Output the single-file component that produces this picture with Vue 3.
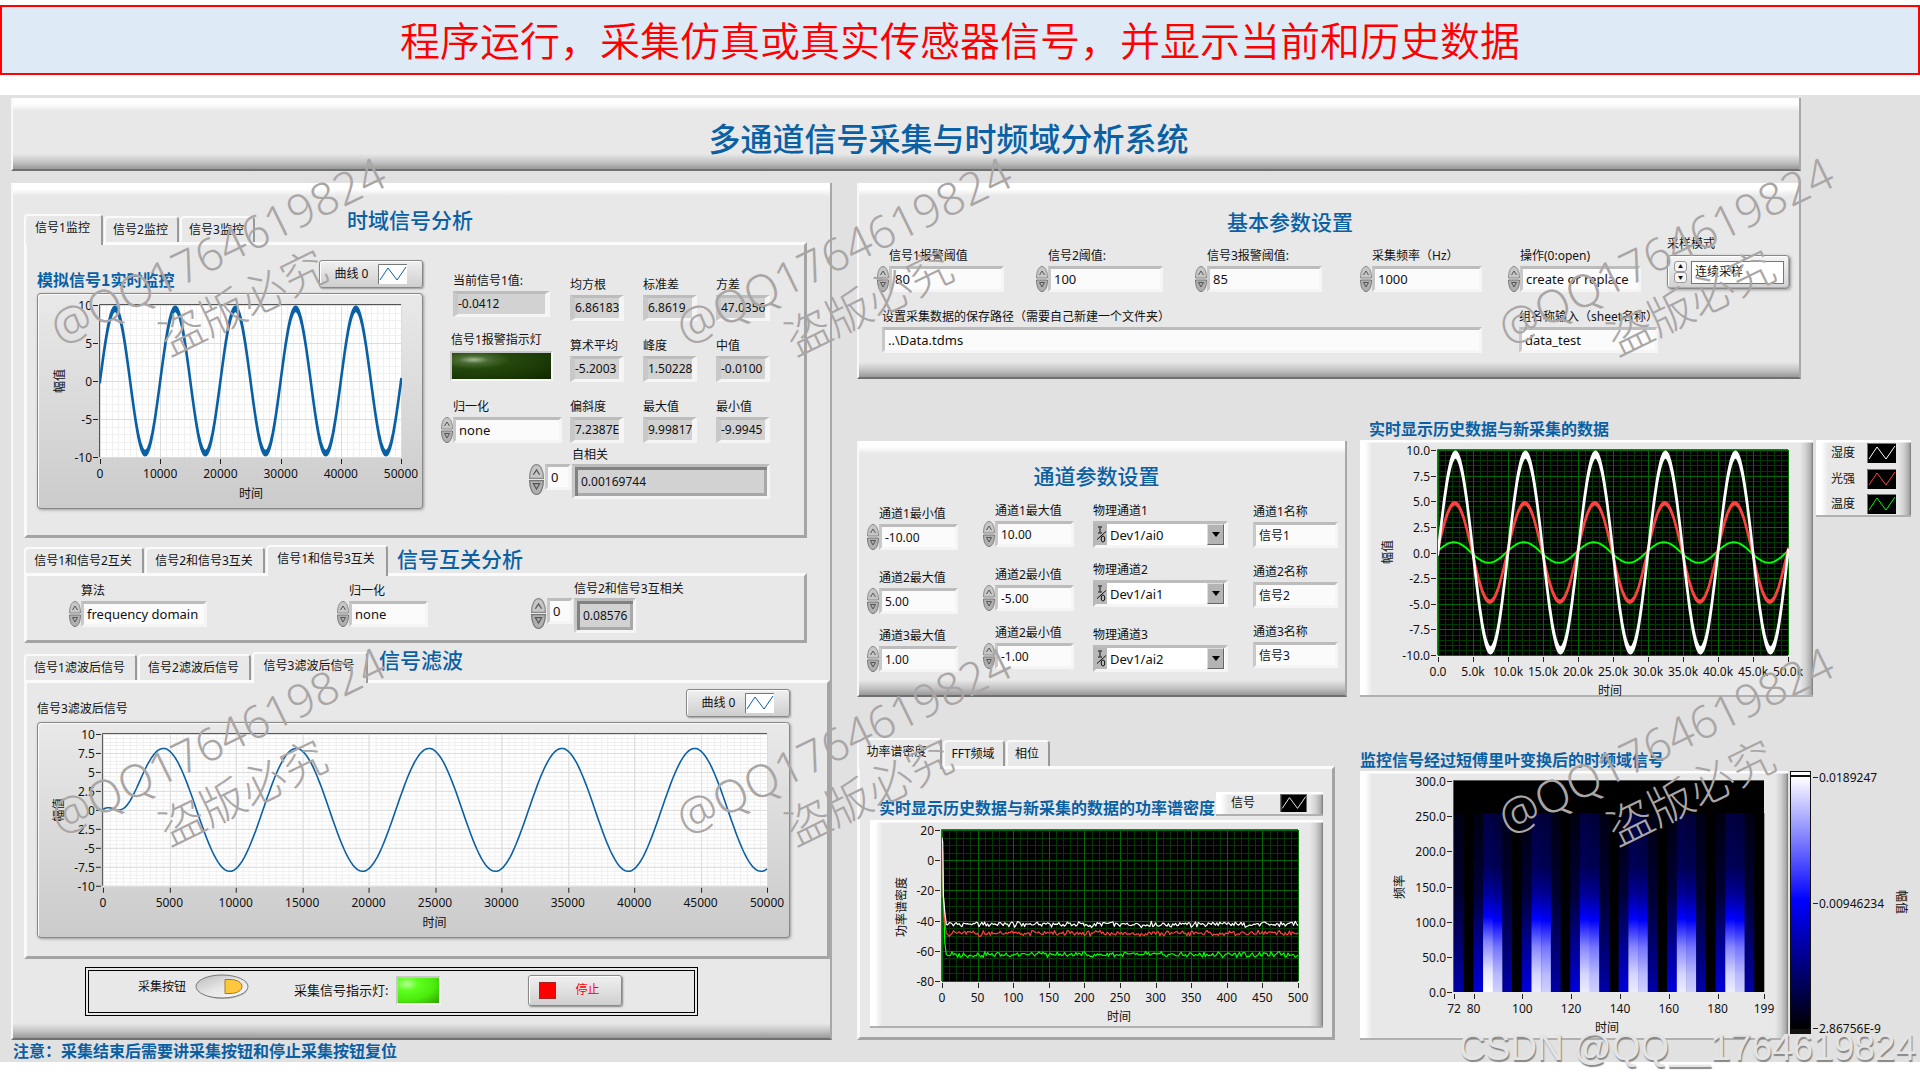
<script setup>
import { h, ref } from 'vue'

const BLUE = '#0a60a4'

/* ---------- curve helpers ---------- */
const wave = (amp, shift) => t => amp * Math.sin((2 * Math.PI * (t - shift)) / 10000)
const filtered = t => 8.1 * Math.sin((2 * Math.PI * (t - 2050)) / 10000) + 7.8 * Math.exp(-((t / 1500) ** 2))
const noise = (i, seed) => {
  const v = Math.sin(i * 12.9898 + seed * 78.233) * 43758.5453
  return (v - Math.floor(v)) * 2 - 1
}
const sample = (fn, max, n) => Array.from({ length: n + 1 }, (_, i) => [(i * max) / n, fn((i * max) / n)])
const floorLine = (start, level, seed) =>
  [[0, start], [1, start - 3], [2, -24], [4, level + 8], [6, level]].concat(
    Array.from({ length: 247 }, (_, i) => [8 + i * 2, level + noise(i, seed) * 1.3 + noise(i, seed + 9) * 0.9])
  )
const range = (from, to, n) => Array.from({ length: n + 1 }, (_, i) => from + ((to - from) * i) / n)

/* ---------- axes with curves ---------- */
const Plot = p => {
  const { w, h: ht, box, xr, yr, dark } = p.c
  const X = v => box[0] + ((v - xr[0]) / (xr[1] - xr[0])) * box[2]
  const Y = v => box[1] + ((yr[1] - v) / (yr[1] - yr[0])) * box[3]
  const right = box[0] + box[2]
  const bottom = box[1] + box[3]
  const vline = (v, color) => h('path', { d: `M${Math.round(X(v)) + 0.5} ${box[1]}V${bottom}`, stroke: color })
  const hline = (v, color) => h('path', { d: `M${box[0]} ${Math.round(Y(v)) + 0.5}H${right}`, stroke: color })
  const minor = dark ? '#003a00' : '#f0f0f0'
  const major = dark ? '#006a00' : '#dcdcdc'
  const kids = [h('rect', { x: box[0], y: box[1], width: box[2], height: box[3], fill: dark ? '#000' : '#fff' })]
  if (p.c.minor) {
    range(xr[0], xr[1], p.c.minor[0]).forEach(v => kids.push(vline(v, minor)))
    range(yr[0], yr[1], p.c.minor[1]).forEach(v => kids.push(hline(v, minor)))
    p.c.xt.forEach(([v]) => kids.push(vline(v, major)))
    p.c.yt.forEach(([v]) => kids.push(hline(v, major)))
  }
  ;(p.c.cells || []).forEach(r => kids.push(h('rect', r)))
  ;(p.c.lines || []).forEach(l => {
    const top = l.pts.map(([x, y]) => `${X(x).toFixed(1)} ${Y(y + (l.band || 0)).toFixed(1)}`)
    const low = l.band ? l.pts.map(([x, y]) => `${X(x).toFixed(1)} ${Y(y - l.band).toFixed(1)}`).reverse() : []
    kids.push(h('path', {
      d: 'M' + top.concat(low).join('L'),
      fill: l.band ? l.color : 'none', stroke: l.color, 'stroke-width': l.width, 'stroke-linejoin': 'round'
    }))
  })
  kids.push(h('path', { d: `M${box[0] - 0.5} ${bottom}V${box[1] - 0.5}H${right}`, stroke: '#555', fill: 'none' }))
  p.c.yt.forEach(([v, t]) => {
    kids.push(h('path', { d: `M${box[0] - 7} ${Math.round(Y(v)) + 0.5}h5`, stroke: '#222' }))
    kids.push(h('text', { x: box[0] - 8, y: Y(v) + 5, 'text-anchor': 'end' }, t))
  })
  p.c.xt.forEach(([v, t]) => {
    kids.push(h('path', { d: `M${Math.round(X(v)) + 0.5} ${bottom + 2}v5`, stroke: '#222' }))
    kids.push(h('text', { x: X(v), y: bottom + 21, 'text-anchor': 'middle' }, t))
  })
  const [lx, ly] = p.c.xl
  const [mx, my] = p.c.yl
  kids.push(h('text', { x: lx, y: ly + 5, 'text-anchor': 'middle' }, '时间'))
  kids.push(h('text', { 'text-anchor': 'middle', transform: `translate(${mx + 5} ${my}) rotate(-90)` }, p.c.yName))
  return h('svg', { viewBox: `0 0 ${w} ${ht}`, 'font-size': 12, fill: '#111', role: 'img', 'aria-label': p.c.name }, kids)
}
Plot.props = ['c']

/* ---------- oval increment / decrement pair ---------- */
const Spin = () =>
  h('button', { type: 'button', 'aria-label': '增减' }, [
    h('svg', { viewBox: '0 0 12 26', width: '100%', height: '100%', preserveAspectRatio: 'none' }, [
      h('path', { d: 'M.5 12C.5 5 3 .5 6 .5S11.500 5 11.500 12Z', fill: '#c6c6c6', stroke: '#8a8a8a' }),
      h('path', { d: 'M.5 14C.5 21 3 25.500 6 25.500S11.500 21 11.500 14Z', fill: '#b0b0b0', stroke: '#777' }),
      h('path', { d: 'M3.500 9 6 5l2.500 4M3.500 16.500h5L6 21Z', fill: 'none', stroke: '#555' })
    ])
  ])

/* ---------- legend curve sample ---------- */
const Swatch = p =>
  h('svg', { viewBox: '0 0 29 20', 'aria-hidden': 'true' }, [
    h('rect', { width: 29, height: 20, fill: p.bg }),
    h('path', { d: 'M.5 20V.5H29', fill: 'none', stroke: '#777' }),
    h('path', { d: 'M2 16 10 4l9 12 9-13', fill: 'none', stroke: p.color })
  ])
Swatch.props = ['bg', 'color']

/* ---------- charts ---------- */
const monitor = {
  name: '模拟信号1实时监控', w: 386, h: 216, box: [63, 12, 301, 152], xr: [0, 50000], yr: [-10, 10],
  minor: [50, 20],
  xt: range(0, 50000, 5).map(v => [v, String(v)]), yt: range(-10, 10, 4).map(v => [v, String(v)]),
  xl: [214, 200], yl: [22, 88], yName: '幅值',
  lines: [{ pts: sample(wave(9.5, 0), 50000, 300), color: BLUE, width: 2, band: 0.3 }]
}
const filterPlot = {
  name: '信号3滤波后信号', w: 754, h: 216, box: [66, 12, 665, 152], xr: [0, 50000], yr: [-10, 10],
  minor: [100, 40],
  xt: range(0, 50000, 10).map(v => [v, String(v)]), yt: range(-10, 10, 8).map(v => [v, String(v)]),
  xl: [398, 200], yl: [21, 88], yName: '幅值',
  lines: [{ pts: sample(filtered, 50000, 300), color: BLUE, width: 1.6 }]
}
const history = {
  name: '历史数据', w: 453, h: 257, box: [78, 10, 350, 205], xr: [0, 50000], yr: [-10, 10], dark: true,
  minor: [50, 40],
  xt: range(0, 50000, 10).map(v => [v, v ? `${v / 1000}.0k` : '0.0']),
  yt: range(-10, 10, 8).map(v => [v, v.toFixed(1)]),
  xl: [250, 250], yl: [27, 112], yName: '幅值',
  lines: [
    { pts: sample(wave(1, -250), 50000, 300), color: '#0f0', width: 2 },
    { pts: sample(wave(4.8, -100), 50000, 300), color: '#ff4040', width: 2, band: 0.12 },
    { pts: sample(wave(9.55, 0), 50000, 300), color: '#fff', width: 2, band: 0.3 }
  ]
}
const power = {
  name: '功率谱密度', w: 453, h: 208, box: [72, 10, 356, 151], xr: [0, 500], yr: [-80, 20], dark: true,
  minor: [50, 20],
  xt: range(0, 500, 10).map(v => [v, String(v)]), yt: range(-80, 20, 5).map(v => [v, String(v)]),
  xl: [249, 196], yl: [31, 87], yName: '功率谱密度',
  lines: [
    { pts: floorLine(-5, -62.5, 3), color: '#0f0', width: 1.2 },
    { pts: floorLine(8, -48.5, 2), color: '#ff4040', width: 1.2 },
    { pts: floorLine(15, -42.5, 1), color: '#fff', width: 1.2 }
  ]
}
const cellW = 310 / 32
const spectrum = {
  name: '时频域信号', w: 428, h: 269, box: [94, 10, 310, 211], xr: [72, 199], yr: [0, 300], dark: true,
  xt: [72, 80, 100, 120, 140, 160, 180, 199].map(v => [v, String(v)]),
  yt: range(0, 300, 6).map(v => [v, v.toFixed(1)]),
  xl: [247, 256], yl: [39, 116], yName: '频率',
  cells: Array.from({ length: 32 }, (_, i) => ({
    x: 94 + i * cellW, y: 42, width: cellW + 0.3, height: 179,
    fill: `url(#band${i % 5 === 3 && i < 5 ? 'Peak' : i % 5})`
  }))
}
const bands = [
  { id: 'band0', stops: [[0, '#000014'], [0.45, '#000030'], [0.75, '#000070'], [1, '#0000a8']] },
  { id: 'band1', stops: [[0, '#000000'], [1, '#000004']] },
  { id: 'band2', stops: [[0, '#000010'], [0.45, '#000038'], [0.75, '#000098'], [1, '#0000dc']] },
  { id: 'bandPeak', stops: [[0, '#000044'], [0.3, '#00005c'], [0.45, '#0000a0'], [0.58, '#0000ff'], [0.72, '#8484ff'], [0.88, '#e4e4ff'], [1, '#ffffff']] },
  { id: 'band3', stops: [[0, '#000040'], [0.3, '#000058'], [0.45, '#000098'], [0.59, '#0000ff'], [0.75, '#8888ff'], [0.9, '#d4d4ff'], [1, '#ececff']] },
  { id: 'band4', stops: [[0, '#000038'], [0.3, '#000050'], [0.45, '#000090'], [0.6, '#0000f8'], [0.75, '#7474ff'], [0.9, '#b8b8ff'], [1, '#d0d0ff']] }
]

/* ---------- front panel data ---------- */
const stats = [
  ['均方根', '6.86183'], ['标准差', '6.8619'], ['方差', '47.0356'],
  ['算术平均', '-5.2003'], ['峰度', '1.50228'], ['中值', '-0.0100'],
  ['偏斜度', '7.2387E'], ['最大值', '9.99817'], ['最小值', '-9.9945']
]
const tabs1 = ['信号1监控', '信号2监控', '信号3监控']
const tabs2 = ['信号1和信号2互关', '信号2和信号3互关', '信号1和信号3互关']
const tabs3 = ['信号1滤波后信号', '信号2滤波后信号', '信号3滤波后信号']
const tabs4 = ['功率谱密度', 'FFT频域', '相位']
const active = ref([0, 2, 2, 0])

const basics = ref([
  { label: '信号1报警阈值', value: '80' },
  { label: '信号2阈值:', value: '100' },
  { label: '信号3报警阈值:', value: '85' },
  { label: '采集频率（Hz）', value: '1000' },
  { label: '操作(0:open)', value: 'create or replace' }
])
const limits = ref([
  [['通道1最小值', '-10.00'], ['通道2最大值', '5.00'], ['通道3最大值', '1.00']],
  [['通道1最大值', '10.00'], ['通道2最小值', '-5.00'], ['通道2最小值', '-1.00']]
])
const names = ref(['信号1', '信号2', '信号3'])
const curves = [['湿度', '#fff'], ['光强', '#ff4040'], ['温度', '#0f0']]
const marks = [[12, 181], [44.6, 181], [87.4, 181], [12, 671], [44.6, 671], [87.4, 671]]
</script>

<template>
  <main class="page">
    <header class="banner">程序运行，采集仿真或真实传感器信号，并显示当前和历史数据</header>

    <div class="desk">
      <h1 class="panel title">多通道信号采集与时频域分析系统</h1>

      <div class="board">
        <div class="side">
          <div class="panel left">
            <!-- time domain -->
            <section class="inset">
              <div class="tabbar">
                <button v-for="(t, i) in tabs1" :key="t" type="button" class="tab narrow" :class="{ on: active[0] === i }" @click="active[0] = i">{{ t }}</button>
                <h2 class="gap-large">时域信号分析</h2>
              </div>
              <div class="sheet time">
                <div class="graph">
                  <div class="graphhead">
                    <h3>模拟信号1实时监控</h3>
                    <div class="legend">曲线 0<Swatch class="swatch" bg="#fff" :color="BLUE" /></div>
                  </div>
                  <div class="frame"><Plot class="plot" :c="monitor" /></div>
                </div>
                <div class="current">
                  <div class="stat indent">
                    <label for="now">当前信号1值:</label>
                    <output id="now" class="well">-0.0412</output>
                  </div>
                  <div class="alarm">
                    <span>信号1报警指示灯</span>
                    <div class="led off"></div>
                  </div>
                  <div class="field">
                    <label for="norm1">归一化</label>
                    <Spin class="spin" /><input id="norm1" class="box" value="none" />
                  </div>
                </div>
                <div class="stats">
                  <div v-for="(s, i) in stats" :key="s[0]" class="stat">
                    <label :for="'stat' + i">{{ s[0] }}</label>
                    <output :id="'stat' + i" class="well">{{ s[1] }}</output>
                  </div>
                </div>
                <div class="array auto">
                  <label for="auto">自相关</label>
                  <Spin class="spin big" /><input class="box" value="0" aria-label="自相关索引" />
                  <output id="auto" class="well deep">0.00169744</output>
                </div>
              </div>
            </section>

            <!-- cross correlation -->
            <section class="inset cross">
              <div class="tabbar">
                <button v-for="(t, i) in tabs2" :key="t" type="button" class="tab wide" :class="{ on: active[1] === i }" @click="active[1] = i">{{ t }}</button>
                <h2>信号互关分析</h2>
              </div>
              <div class="sheet corr">
                <div class="field w-algo">
                  <label for="algo">算法</label>
                  <Spin class="spin" /><input id="algo" class="box" value="frequency domain" />
                </div>
                <div class="field w-norm">
                  <label for="norm2">归一化</label>
                  <Spin class="spin" /><input id="norm2" class="box" value="none" />
                </div>
                <div class="array short">
                  <label for="cc">信号2和信号3互相关</label>
                  <Spin class="spin big" /><input class="box" value="0" aria-label="互相关索引" />
                  <output id="cc" class="well deep">0.08576</output>
                </div>
              </div>
            </section>

            <!-- filtering -->
            <section class="filter">
              <div class="tabbar">
                <button v-for="(t, i) in tabs3" :key="t" type="button" class="tab mid" :class="{ on: active[2] === i }" @click="active[2] = i">{{ t }}</button>
                <h2>信号滤波</h2>
              </div>
              <div class="sheet filtersheet">
                <div class="graphhead">
                  <span>信号3滤波后信号</span>
                  <div class="legend">曲线 0<Swatch class="swatch" bg="#fff" :color="BLUE" /></div>
                </div>
                <div class="frame"><Plot class="plot" :c="filterPlot" /></div>
              </div>
            </section>

            <div class="actions">
              <label class="raise" for="acq">采集按钮</label>
              <button id="acq" type="button" class="toggle raise" aria-pressed="true">
                <svg viewBox="0 0 54 26">
                  <defs>
                    <linearGradient id="oval" x1="0" y1="0" x2="1" y2="1"><stop offset="0" stop-color="#bbb" /><stop offset=".5" stop-color="#e6e6e6" /><stop offset="1" stop-color="#fafafa" /></linearGradient>
                  </defs>
                  <ellipse cx="28" cy="14" rx="25" ry="11" fill="#bbb" />
                  <ellipse cx="27" cy="12.500" rx="26" ry="11.500" fill="url(#oval)" stroke="#777" />
                  <path d="M30 5.500h5c7 0 12 3 12 7s-5 7-12 7h-5Z" fill="#ffc83c" stroke="#9a7c28" />
                </svg>
              </button>
              <span class="ledlabel">采集信号指示灯:</span>
              <div class="led on"></div>
              <button type="button" class="stop"><i></i>停止</button>
            </div>
          </div>
          <p class="note">注意：采集结束后需要讲采集按钮和停止采集按钮复位</p>
        </div>

        <div class="rest">
          <section class="panel basic">
            <h2>基本参数设置</h2>
            <div class="basicgrid">
              <div v-for="(b, i) in basics" :key="b.label" class="field" :class="'b' + i">
                <label :for="'basic' + i">{{ b.label }}</label>
                <Spin class="spin" /><input :id="'basic' + i" v-model="b.value" class="box" />
              </div>
              <div class="mode">
                <label for="mode">采样模式</label>
                <div class="modebox">
                  <span class="steps"><button type="button" aria-label="上">▲</button><button type="button" aria-label="下">▼</button></span>
                  <select id="mode"><option>连续采样</option></select>
                </div>
              </div>
              <div class="stat path">
                <label for="path">设置采集数据的保存路径（需要自己新建一个文件夹）</label>
                <input id="path" class="box" value="..\Data.tdms" />
              </div>
              <div class="stat group">
                <label for="group">组名称输入（sheet名称）</label>
                <input id="group" class="box" value="data_test" />
              </div>
            </div>
          </section>

          <div class="split">
            <div class="col">
              <section class="panel channel">
                <h2>通道参数设置</h2>
                <div class="channels">
                  <div v-for="(col, c) in limits" :key="c" class="stack" :class="'s' + c">
                    <div v-for="(f, r) in col" :key="r" class="field">
                      <label :for="`lim${c}${r}`">{{ f[0] }}</label>
                      <Spin class="spin" /><input :id="`lim${c}${r}`" v-model="f[1]" class="box num" />
                    </div>
                  </div>
                  <div class="stack s2">
                    <div v-for="n in 3" :key="n" class="stat">
                      <label :for="'dev' + n">物理通道{{ n }}</label>
                      <div class="device">
                        <svg viewBox="0 0 11 20" aria-hidden="true"><path d="M2 2.500h4M4 3v5M2 8.500h4M1 15 10 7" fill="none" stroke="#111" /><ellipse cx="7" cy="14.500" rx="1.800" ry="3" fill="none" stroke="#111" /></svg>
                        <select :id="'dev' + n"><option>Dev1/ai{{ n - 1 }}</option></select>
                        <span class="drop"></span>
                      </div>
                    </div>
                  </div>
                  <div class="stack s3">
                    <div v-for="(n, i) in names" :key="i" class="stat">
                      <label :for="'name' + i">通道{{ i + 1 }}名称</label>
                      <input :id="'name' + i" v-model="names[i]" class="box num" />
                    </div>
                  </div>
                </div>
              </section>

              <section class="psd">
                <div class="tabbar">
                  <button v-for="(t, i) in tabs4" :key="t" type="button" class="tab" :class="[{ on: active[3] === i }, 'p' + i]" @click="active[3] = i">{{ t }}</button>
                </div>
                <div class="sheet psdsheet">
                  <div class="psdhead">
                    <h3>实时显示历史数据与新采集的数据的功率谱密度</h3>
                    <div class="raised psdlegend">信号<Swatch class="swatch flat" bg="#000" color="#fff" /></div>
                  </div>
                  <div class="raised"><Plot class="plot" :c="power" /></div>
                </div>
              </section>
            </div>

            <div class="col">
              <h3 class="charttitle indent9">实时显示历史数据与新采集的数据</h3>
              <div class="histrow">
                <div class="raised"><Plot class="plot" :c="history" /></div>
                <ul class="raised curves">
                  <li v-for="c in curves" :key="c[0]">{{ c[0] }}<Swatch class="swatch" bg="#000" :color="c[1]" /></li>
                </ul>
              </div>
              <h3 class="charttitle second">监控信号经过短傅里叶变换后的时频域信号</h3>
              <div class="specrow">
                <div class="raised"><Plot class="plot" :c="spectrum" /></div>
                <svg class="plot" viewBox="0 0 130 269" font-size="12" fill="#111" role="img" aria-label="幅值色阶">
                  <defs>
                    <linearGradient v-for="b in bands" :id="b.id" :key="b.id" x1="0" y1="0" x2="0" y2="1">
                      <stop v-for="s in b.stops" :key="s[0]" :offset="s[0]" :stop-color="s[1]" />
                    </linearGradient>
                    <linearGradient id="ramp" x1="0" y1="0" x2="0" y2="1">
                      <stop offset="0" stop-color="#fff" /><stop offset=".49" stop-color="#00f" /><stop offset="1" stop-color="#000" />
                    </linearGradient>
                  </defs>
                  <rect width="21" height="263" fill="#111" />
                  <rect x="1" y="1" width="19" height="3" fill="#fff" />
                  <rect x="1" y="6" width="19" height="252" fill="url(#ramp)" />
                  <path d="M23 6.500h5M23 132.500h5M23 257.500h5" stroke="#222" />
                  <text x="29" y="11">0.0189247</text>
                  <text x="29" y="137">0.00946234</text>
                  <text x="29" y="262">2.86756E-9</text>
                  <text text-anchor="middle" transform="translate(107 131) rotate(90)">幅值</text>
                </svg>
              </div>
            </div>
          </div>
        </div>
      </div>

      <div class="marks">
        <p v-for="(m, i) in marks" :key="i" :style="{ left: m[0] + '%', top: m[1] + 'px' }">@QQ1764619824<br />盗版必究</p>
      </div>
      <p class="credit">CSDN @QQ__1764619824</p>
    </div>
  </main>
</template>

<style>
html, body { background: #fff; }
</style>

<style scoped>
* { box-sizing: border-box; }
.page {
  padding: 5px 0 16px;
  font: 12px/16px "Noto Sans", "Noto Sans CJK SC", sans-serif;
  color: #111;
  overflow: hidden;
}
h1, h2, h3, p, ul { margin: 0; padding: 0; }
button, input, select, output { font: inherit; color: inherit; }
button { padding: 0; border: 0; background: none; }

.banner {
  height: 70px;
  margin-bottom: 20px;
  border: 2px solid #f00;
  background: #deeaf6;
  color: #f00;
  font: 350 40px/64px "Noto Sans CJK SC", sans-serif;
  text-align: center;
}
.desk { position: relative; padding: 3px 0 0 11px; background: #e1e1e1; }

.panel {
  border-left: 2px solid #f8f8f8;
  border-right: 2px solid #a8a8a8;
  border-bottom: 2px solid #707070;
  background:
    linear-gradient(#fff 0, #fff 6px, #e8e8e800 13px),
    linear-gradient(to top, #999 0, #c4c4c4 7px, #e8e8e800 15px),
    #e8e8e8;
}
.title {
  height: 73px;
  margin-right: 119px;
  margin-bottom: 12px;
  padding-left: 85px;
  color: #0a60a4;
  font: 500 32px/78px "Noto Sans CJK SC", sans-serif;
  text-align: center;
}
h2 { color: #0a60a4; font: 500 21px/24px "Noto Sans CJK SC", sans-serif; white-space: nowrap; }
h3 { color: #0a60a4; font: 700 16px/16px "Noto Sans CJK SC", sans-serif; white-space: nowrap; }

.board { display: grid; grid-template-columns: 821fr 1063fr; column-gap: 25px; }
.left { padding: 31px 0 22px 11px; }
.note { color: #0a60a4; font: 700 16px/20px "Noto Sans CJK SC", sans-serif; white-space: nowrap; padding: 0 0 2px 2px; }

/* tab strips */
.inset { margin-right: 23px; }
.tabbar { display: flex; align-items: flex-end; height: 28px; }
.tab {
  height: 26px;
  margin-right: 1px;
  padding-right: 2px;
  border: 2px solid #fafafa;
  border-right: 2px solid #999;
  border-bottom: 0;
  border-radius: 4px 4px 0 0;
  background: #e8e8e8;
  white-space: nowrap;
}
.tab.on { position: relative; height: 31px; margin-bottom: -3px; padding-bottom: 6px; }
.tab.narrow { width: 75px; }
.tab.narrow.on { width: 79px; }
.tab.wide { width: 120px; }
.tab.wide.on { width: 122px; }
.tab.mid { width: 113px; }
.tab.mid.on { width: 116px; }
.tab.p0 { width: 85px; padding-right: 6px; }
.tab.p1 { width: 62px; }
.tab.p2 { width: 44px; }
.tabbar h2 { padding-left: 8px; align-self: flex-start; }
.tabbar h2.gap-large { padding-left: 91px; margin-top: -7px; }
.sheet {
  border: 3px solid;
  border-color: #fbfbfb #a4a4a4 #a4a4a4 #fafafa;
  background: #e8e8e8;
}

/* labelled controls */
label { line-height: 18px; }
.field { display: grid; grid-template-columns: 12px 1fr; row-gap: 1px; align-content: start; }
.field label { grid-column: 2; white-space: nowrap; }
.spin { display: block; width: 12px; height: 26px; }
.spin.big { width: 15px; height: 31px; }
.stat { display: grid; row-gap: 1px; align-content: start; }
.stat label { white-space: nowrap; }
.box, .well {
  display: block;
  width: 100%;
  min-width: 0;
  height: 26px;
  margin: 0;
  padding: 0 3px;
  border: 3px solid;
  border-color: #bcbcbc #f5f5f5 #f5f5f5 #c8c8c8;
  border-radius: 0;
  background: #fbfbfb;
  font-size: 13px;
  line-height: 20px;
  overflow: hidden;
  white-space: nowrap;
}
.box.num { font-size: 12px; }
.well { background: #d2d2d2; font-size: 12px; padding: 0; border-left-width: 5px; border-right-width: 5px; }
.deep {
  height: 35px;
  border-left-width: 3px;
  border-right-width: 3px;
  box-shadow: inset 3px 3px #828282, inset -3px -3px #a8a8a8;
  padding: 0 6px;
  line-height: 30px;
}

/* time domain sheet */
.time {
  display: grid;
  grid-template-columns: 404fr 129fr 234fr;
  grid-template-rows: max-content 1fr;
  row-gap: 3px;
  min-height: 296px;
  padding: 15px 0 0 10px;
}
.graph { grid-row: 1 / 3; padding-right: 18px; }
.graphhead { display: flex; justify-content: space-between; align-items: flex-end; height: 28px; margin-bottom: 5px; }
.graphhead h3 { padding-bottom: 1px; }
.legend {
  display: flex;
  align-items: center;
  justify-content: center;
  gap: 10px;
  width: 104px;
  height: 28px;
  border: 1px solid #888;
  border-radius: 3px;
  background: linear-gradient(#f0f0f0, #cecece);
  box-shadow: inset 1px 1px #fff, 1px 1px 2px #999;
}
.swatch { width: 29px; height: 20px; display: block; }
.swatch.flat { height: 18px; }
.frame {
  border-radius: 4px;
  background: linear-gradient(#e9e9e9, #cbcbcb);
  box-shadow: inset 0 0 0 1px #888, inset 2px 2px #fafafa, 1px 1px 3px #999;
}
.plot { display: block; width: 100%; height: auto; }
.current { padding: 12px 8px 0 0; }
.current .indent { margin: 0 12px; }
.current .alarm { margin: 15px 9px 0; }
.alarm span { display: block; margin-bottom: 3px; padding-left: 1px; white-space: nowrap; }
.led { border: 2px solid; border-color: #c8c8c8 #f8f8f8 #f8f8f8 #c8c8c8; }
.led.off { height: 30px; background: radial-gradient(ellipse at 22% 26%, #a3b894 0, #4a6b33 14%, #24480c 34%, #1d3d07 60%, #102600 100%); }
.led.on { width: 45px; height: 29px; background: radial-gradient(ellipse at 22% 24%, #b4ff94 0, #5cff1c 26%, #4cec0e 60%, #2ba400 100%); }
.current .field { margin-top: 17px; }
.stats { display: grid; grid-template-columns: 54px 54px 54px; column-gap: 19px; row-gap: 16px; align-content: start; padding-top: 16px; }
.array { display: grid; grid-template-columns: 15px 26px 1fr; column-gap: 1px; align-content: start; }
.array label { grid-column: 3; white-space: nowrap; }
.auto { grid-column: 2 / 4; padding: 0 34px 0 125px; margin-left: -37px; }

/* cross correlation sheet */
.cross { margin-top: 8px; }
.cross .tabbar { height: 27px; }
.corr { display: grid; grid-template-columns: 268fr 194fr 273fr; min-height: 70px; padding: 6px 0 0 42px; }
.w-algo { width: 138px; }
.w-norm { width: 91px; }
.short { grid-template-columns: 15px 26px 62px; margin-top: -2px; }

/* filter sheet */
.filter { margin-top: 9px; }
.filter h2 { margin-top: -5px; padding-left: 10px; }
.filtersheet { min-height: 279px; padding: 6px 37px 0 10px; }
.actions {
  display: flex;
  align-items: center;
  height: 49px;
  margin: 8px 132px 0 61px;
  padding: 0 0 3px 49px;
  border: 4px double #000;
}
.raise { margin-bottom: 6px; }
.toggle { width: 54px; height: 26px; margin-left: 9px; }
.toggle svg { display: block; }
.ledlabel { margin-left: 45px; margin-right: 7px; font-size: 13px; }
.stop {
  display: flex;
  align-items: center;
  gap: 20px;
  width: 94px;
  height: 31px;
  margin-left: 87px;
  padding-left: 10px;
  border: 1px solid #888;
  border-radius: 3px;
  background: linear-gradient(#f0f0f0, #e0e0e0 50%, #cfcfcf);
  box-shadow: inset 1px 1px #fff, 1px 1px 2px #888;
  color: #f00;
}
.stop i { width: 17px; height: 17px; background: #f00; border: 1px solid #a22; }

/* basic parameters */
.basic { height: 196px; margin-right: 119px; padding: 26px 9px 0 18px; }
.basic h2 { padding-left: 350px; }
.basicgrid {
  display: grid;
  grid-template-columns: 159fr 159fr 165fr 148fr 159fr 123fr;
  grid-template-rows: 61px auto;
  margin-top: 14px;
}
.basicgrid .field { width: 127px; }
.basicgrid .b3 { width: 122px; }
.basicgrid .b4 { width: 133px; }
.mode { margin-top: -12px; }
.mode label { display: block; margin-bottom: 2px; }
.modebox {
  display: flex;
  align-items: center;
  height: 34px;
  padding: 0 5px 0 6px;
  border: 1px solid #888;
  border-radius: 4px;
  background: linear-gradient(#f4f4f4, #d0d0d0);
  box-shadow: inset 1px 1px #fff, inset -1px -1px #aaa, 1px 1px 3px #999;
}
.steps { display: grid; margin-right: 4px; }
.steps button { width: 13px; height: 11px; border: 1px solid #999; border-radius: 3px; background: #f4f4f4; font-size: 5px; line-height: 9px; }
select { appearance: none; border: 0; background: none; padding: 0; margin: 0; border-radius: 0; min-width: 0; flex: 1; }
.modebox select { height: 23px; padding-left: 3px; border: 1px solid #777; background: #fff; }
.path { grid-column: 1 / 5; margin: 0 26px 0 5px; }
.group { width: 96px; margin-left: 11px; }

/* channel parameters */
.split { display: grid; grid-template-columns: 503fr 560fr; }
.channel { min-height: 256px; margin: 62px 13px 0 0; padding: 22px 7px 0 8px; }
.channel h2 { text-align: center; padding-right: 12px; }
.channels { display: grid; grid-template-columns: 116fr 110fr 160fr 85fr; margin-top: 15px; }
.s0, .s1 { width: 91px; }
.s0 { padding-top: 3px; }
.s2 { width: 135px; }
.s3 { padding-top: 1px; }
.s0 > :nth-child(2), .s1 > :nth-child(2), .s2 > :nth-child(3) { margin-top: 19px; }
.s0 > :nth-child(3), .s1 > :nth-child(3), .s2 > :nth-child(2) { margin-top: 13px; }
.s3 > :nth-child(n + 2) { margin-top: 15px; }
.device {
  display: flex;
  height: 27px;
  padding-right: 1px;
  border: 3px solid;
  border-color: #bcbcbc #f5f5f5 #f5f5f5 #b8b8b8;
  background: #fff;
}
.device svg { width: 11px; height: 21px; background: #b8b8b8; }
.device select { padding-left: 3px; font-size: 13px; line-height: 20px; }
.drop { width: 17px; border: 1px solid #888; border-color: #ddd #666 #666 #ddd; background: #b4b4b4; display: grid; place-items: center; }
.drop::after { content: ""; border: 4px solid transparent; border-top: 5px solid #000; border-bottom: 0; }

/* raised chart panels */
.raised {
  border-bottom: 2px solid #b0b0b0;
  background:
    linear-gradient(#fff 0, #fff 2px, #fff0 3px),
    linear-gradient(to right, #fff 0, #fff 5px, #e8e8e800 12px),
    linear-gradient(to left, #777 0, #aaa 2px, #d0d0d0 7px, #e8e8e800 13px),
    #e8e8e8;
}
.raised > .plot { margin-bottom: -2px; }
.psd { margin-top: 41px; padding-right: 25px; }
.psdsheet { min-height: 274px; padding: 23px 9px 0 10px; }
.psdhead { display: flex; height: 28px; align-items: flex-start; justify-content: space-between; }
.psdhead h3 { width: 346px; padding: 7px 0 0 9px; flex: none; }
.psdlegend { flex: 1; display: flex; height: 24px; align-items: center; justify-content: space-between; padding: 0 15px 0 15px; }
.charttitle { height: 22px; margin-top: 39px; line-height: 20px; }
.charttitle.second { margin-top: 52px; }
.indent9 { padding-left: 9px; }
.histrow { display: grid; grid-template-columns: 453fr 95fr; column-gap: 3px; margin-right: 9px; align-items: start; }
.curves { display: grid; row-gap: 5px; height: 77px; padding: 3px 15px 0; list-style: none; }
.curves li { display: flex; justify-content: space-between; align-items: center; height: 20px; }
.specrow { display: grid; grid-template-columns: 428fr 130fr; column-gap: 2px; align-items: start; }

/* watermarks */
.marks { position: absolute; inset: 0; pointer-events: none; }
.marks p {
  position: absolute;
  color: #aaa6a6;
  font: 300 45px/58px "Noto Sans", "Noto Sans CJK SC", sans-serif;
  text-align: center;
  white-space: nowrap;
  transform: translate(-50%, -50%) rotate(-26deg);
}
.credit {
  position: absolute;
  right: 4px;
  bottom: -7px;
  color: #e4e4e4;
  font: 37px/42px "Liberation Sans", sans-serif;
  text-shadow: 1px 2px 1px #888;
  pointer-events: none;
}
</style>
